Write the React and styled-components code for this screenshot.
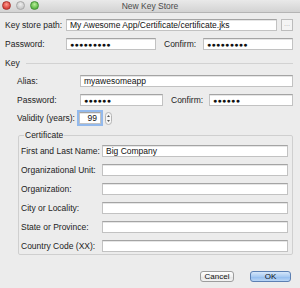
import React from "react";
import styled, { createGlobalStyle } from "styled-components";

const Global = createGlobalStyle`
  html, body { margin: 0; padding: 0; background: #ececec; }
  body { font-family: "Liberation Sans", Arial, sans-serif; }
`;

const Window = styled.div`
  width: 300px;
  height: 288px;
  background: #ececec;
  overflow: hidden;
  color: #222;
  font-size: 8.5px;
`;

const TitleBar = styled.div`
  position: relative;
  height: 12px;
  background: linear-gradient(#e9e9e9, #d3d3d3);
  border-bottom: 1px solid #b4b4b4;
  display: flex;
  align-items: center;
  justify-content: center;
  color: #4a4a4a;
  font-size: 8.5px;
`;

const Lights = styled.div`
  position: absolute;
  left: 2px;
  top: 1px;
  display: flex;
  gap: 5px;
`;

const Light = styled.span`
  width: 7px;
  height: 7px;
  border-radius: 50%;
  background: radial-gradient(circle at 50% 35%, ${(p) => p.$hi} 0, ${(p) => p.$c} 70%);
  border: 0.5px solid ${(p) => p.$b};
`;

const Body = styled.div`
  padding: 6px 7px 0 5px;
`;

const Row = styled.div`
  display: flex;
  align-items: center;
  height: 12px;
  margin-top: ${(p) => p.$mt || 0}px;
  padding-left: ${(p) => p.$indent || 0}px;
`;

const Label = styled.div`
  width: ${(p) => p.$w}px;
  flex: none;
  white-space: nowrap;
  line-height: 12px;
`;

const Input = styled.div`
  box-sizing: border-box;
  width: ${(p) => (p.$w ? `${p.$w}px` : "auto")};
  flex: ${(p) => (p.$w ? "none" : "1")};
  height: 12px;
  background: #fff;
  border: 1px solid #c2c2c2;
  border-top-color: #a4a4a4;
  box-shadow: inset 0 1px 0 #e6e6e6;
  padding: 0 3px;
  font-size: 8.5px;
  line-height: 10px;
  white-space: nowrap;
  overflow: hidden;
  color: #111;
  text-align: ${(p) => (p.$right ? "right" : "left")};
  outline: ${(p) => (p.$focus ? "2px solid #93b9ec" : "none")};
  outline-offset: 0;
`;

const Dots = styled.span`
  font-size: 7px;
  letter-spacing: 0.3px;
  position: relative;
  top: -0.5px;
`;

const BrowseButton = styled.div`
  box-sizing: border-box;
  width: 12px;
  height: 12px;
  margin-left: 4px;
  border: 1px solid #bcbcbc;
  background: #f4f4f4;
  color: #777;
  font-size: 6px;
  display: flex;
  align-items: center;
  justify-content: center;
  line-height: 1;
`;

const Spacer = styled.div`
  width: ${(p) => p.$w}px;
  flex: none;
`;

const SectionHead = styled.div`
  display: flex;
  align-items: center;
  margin-top: 8px;
  height: 10px;
`;

const HeadLine = styled.div`
  flex: 1;
  height: 1px;
  background: #d2d2d2;
  margin-left: 6px;
`;

const Stepper = styled.svg`
  margin-left: 4px;
  flex: none;
`;

const Group = styled.fieldset`
  margin: 7px 0 0 13px;
  padding: 0 4px 2px 2px;
  border: 1px solid #cfcfcf;
  border-radius: 2px;
  min-width: 0;
`;

const Legend = styled.legend`
  padding: 0 1px;
  margin-left: 3px;
  font-size: 8.5px;
  line-height: 9px;
`;

const Footer = styled.div`
  display: flex;
  justify-content: flex-end;
  gap: 16px;
  margin-top: 16px;
  padding-right: 2px;
`;

const Button = styled.div`
  box-sizing: border-box;
  width: ${(p) => p.$w}px;
  height: 11px;
  border-radius: 3px;
  border: 1px solid ${(p) => (p.$primary ? "#5c80b3" : "#9d9d9d")};
  background: ${(p) =>
    p.$primary
      ? "linear-gradient(#d6e7fa, #a9cbf2 50%, #8fbaee 51%, #b9d6f6)"
      : "linear-gradient(#ffffff, #f1f1f1 50%, #e4e4e4 51%, #f3f3f3)"};
  font-size: 8px;
  display: flex;
  align-items: center;
  justify-content: center;
  color: #111;
`;

const dots = (n) => <Dots>{"●".repeat(n)}</Dots>;

const certFields = [
  ["First and Last Name:", "Big Company"],
  ["Organizational Unit:", ""],
  ["Organization:", ""],
  ["City or Locality:", ""],
  ["State or Province:", ""],
  ["Country Code (XX):", ""],
];

export default function App() {
  return (
    <Window>
      <Global />
      <TitleBar>
        <Lights>
          <Light $c="#d8403a" $hi="#ff9a8c" $b="#a8322c" />
          <Light $c="#c9c9c9" $hi="#eeeeee" $b="#a7a7a7" />
          <Light $c="#5cb845" $hi="#b9ee9a" $b="#449236" />
        </Lights>
        New Key Store
      </TitleBar>
      <Body>
        <Row>
          <Label $w={61}>Key store path:</Label>
          <Input>My Awesome App/Certificate/certificate.jks</Input>
          <BrowseButton>···</BrowseButton>
        </Row>
        <Row $mt={7}>
          <Label $w={61}>Password:</Label>
          <Input $w={90}>{dots(9)}</Input>
          <Spacer $w={8} />
          <Label $w={39}>Confirm:</Label>
          <Input>{dots(9)}</Input>
        </Row>

        <SectionHead>
          Key
          <HeadLine />
        </SectionHead>

        <Row $mt={7} $indent={12}>
          <Label $w={63}>Alias:</Label>
          <Input>myawesomeapp</Input>
        </Row>
        <Row $mt={7} $indent={12}>
          <Label $w={63}>Password:</Label>
          <Input $w={83}>{dots(6)}</Input>
          <Spacer $w={8} />
          <Label $w={38}>Confirm:</Label>
          <Input>{dots(6)}</Input>
        </Row>
        <Row $mt={6} $indent={12}>
          <Label $w={62}>Validity (years):</Label>
          <Input $w={22} $right $focus>
            99
          </Input>
          <Stepper width="7" height="13" viewBox="0 0 7 13">
            <rect x="0.5" y="0.5" width="6" height="12" rx="3" fill="#f6f6f6" stroke="#b5b5b5" />
            <path d="M2 5 L3.5 3 L5 5 Z" fill="#555" />
            <path d="M2 8 L3.5 10 L5 8 Z" fill="#555" />
          </Stepper>
        </Row>

        <Group>
          <Legend>Certificate</Legend>
          {certFields.map(([label, value], i) => (
            <Row key={label} $mt={i === 0 ? 5 : 7}>
              <Label $w={81}>{label}</Label>
              <Input>{value}</Input>
            </Row>
          ))}
        </Group>

        <Footer>
          <Button $w={34}>Cancel</Button>
          <Button $w={41} $primary>
            OK
          </Button>
        </Footer>
      </Body>
    </Window>
  );
}
